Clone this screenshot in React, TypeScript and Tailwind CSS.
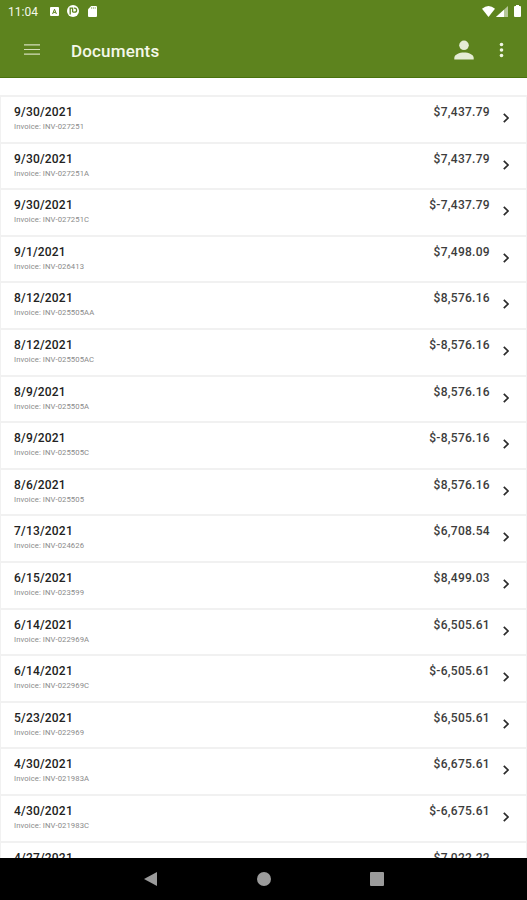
import React from "react";

interface DocumentEntry {
    date: string;
    invoice?: string;
    amount: string;
}

const documents: DocumentEntry[] = [
    { date: "9/30/2021", invoice: "INV-027251", amount: "$7,437.79" },
    { date: "9/30/2021", invoice: "INV-027251A", amount: "$7,437.79" },
    { date: "9/30/2021", invoice: "INV-027251C", amount: "$-7,437.79" },
    { date: "9/1/2021", invoice: "INV-026413", amount: "$7,498.09" },
    { date: "8/12/2021", invoice: "INV-025505AA", amount: "$8,576.16" },
    { date: "8/12/2021", invoice: "INV-025505AC", amount: "$-8,576.16" },
    { date: "8/9/2021", invoice: "INV-025505A", amount: "$8,576.16" },
    { date: "8/9/2021", invoice: "INV-025505C", amount: "$-8,576.16" },
    { date: "8/6/2021", invoice: "INV-025505", amount: "$8,576.16" },
    { date: "7/13/2021", invoice: "INV-024626", amount: "$6,708.54" },
    { date: "6/15/2021", invoice: "INV-023599", amount: "$8,499.03" },
    { date: "6/14/2021", invoice: "INV-022969A", amount: "$6,505.61" },
    { date: "6/14/2021", invoice: "INV-022969C", amount: "$-6,505.61" },
    { date: "5/23/2021", invoice: "INV-022969", amount: "$6,505.61" },
    { date: "4/30/2021", invoice: "INV-021983A", amount: "$6,675.61" },
    { date: "4/30/2021", invoice: "INV-021983C", amount: "$-6,675.61" },
    { date: "4/27/2021", amount: "$7,022.22" },
];

const StatusBar: React.FC = () => (
    <div className="flex h-[22px] items-center justify-between pl-2 pr-[6px] text-white">
        <div className="flex items-center">
            <span className="w-[31px] whitespace-nowrap pt-[2px] text-[12px] leading-none text-[#f4f8e9]">11:04</span>
            <svg className="ml-[11px] h-[9px] w-[9px]" viewBox="0 0 9 9">
                <rect width="9" height="9" rx="1" fill="#fff" />
                <path d="M2.6 7 4.5 2.2 6.4 7M3.3 5.4h2.4" fill="none" stroke="#5d831e" strokeWidth="1" />
            </svg>
            <svg className="ml-2 h-3 w-3" viewBox="0 0 12 12">
                <circle cx="6" cy="6" r="6" fill="#fff" />
                <path d="M3.2 9.5V3.2h2.4v4M7 3.2h.6a2 2 0 0 1 0 4H5.8" fill="none" stroke="#5d831e" strokeWidth="1.3" />
            </svg>
            <svg className="ml-[9px] h-[11px] w-[9px]" viewBox="0 0 9 11">
                <path d="M3.2 0H8a1 1 0 0 1 1 1v9a1 1 0 0 1-1 1H1a1 1 0 0 1-1-1V3.2z" fill="#fff" />
                <path d="M3.6 1.2v1.6M5.4 1.2v1.6M7.2 1.2v1.6" stroke="#5d831e" strokeWidth=".6" />
            </svg>
        </div>
        <div className="flex items-center">
            <svg className="h-[11px] w-[13px]" viewBox="0 0 13 11">
                <path d="M0 2.8Q6.5-2.6 13 2.8L6.5 11z" fill="#fff" />
            </svg>
            <svg className="ml-[1px] h-[11px] w-3" viewBox="0 0 12 11">
                <path d="M0 11 12 0v11z" fill="#fff" fillOpacity=".55" />
                <path d="M0 11 8 3.7V11z" fill="#fff" />
            </svg>
            <svg className="ml-[6px] h-3 w-[7px]" viewBox="0 0 7 12">
                <path d="M2 0h3v1h1a1 1 0 0 1 1 1v9a1 1 0 0 1-1 1H1a1 1 0 0 1-1-1V2a1 1 0 0 1 1-1h1z" fill="#fff" />
            </svg>
        </div>
    </div>
);

const AppBar: React.FC = () => (
    <div className="flex h-14 items-center border-b border-[#49720d] pl-6 pr-[23px]">
        <button className="flex h-4 w-4 items-center" aria-label="Menu">
            <svg className="h-[11px] w-4" viewBox="0 0 16 11">
                <path d="M0 .8h16M0 5.5h16M0 10.2h16" stroke="#d3deb9" strokeWidth="1.2" />
            </svg>
        </button>
        <h1 className="ml-[31px] flex-1 pt-[3px] text-[17px] font-medium leading-none tracking-[0.16px] text-[#f4f8e9]">Documents</h1>
        <button aria-label="Account">
            <svg className="h-5 w-5" viewBox="0 0 20 20">
                <circle cx="10" cy="5.3" r="4.8" fill="#e5ecd5" />
                <path d="M.3 19.5v-1.7c0-3.5 5.2-5.4 9.7-5.4s9.7 1.9 9.7 5.4v1.7z" fill="#e5ecd5" />
            </svg>
        </button>
        <button className="ml-[25px]" aria-label="More">
            <svg className="h-4 w-[5px]" viewBox="0 0 5 16">
                <circle cx="2.5" cy="2.5" r="1.8" fill="#f0f5e4" />
                <circle cx="2.5" cy="8" r="1.8" fill="#f0f5e4" />
                <circle cx="2.5" cy="13.5" r="1.8" fill="#f0f5e4" />
            </svg>
        </button>
    </div>
);

const DocumentRow: React.FC<{ entry: DocumentEntry }> = ({ entry }) => (
    <li className="flex h-[46.6px] shrink-0 justify-between border-b-2 border-[#f1f1f1] pl-[13px] pr-[17px] pt-[8px]">
        <div>
            <p className="text-[12px] font-medium leading-[14px] tracking-[0.2px] text-[#222]">{entry.date}</p>
            {entry.invoice && (
                <p className="mt-[3px] text-[7.7px] leading-[9px] tracking-[0.08px] text-[#8a8a8a]">Invoice: {entry.invoice}</p>
            )}
        </div>
        <div className="flex">
            <span className="text-[12px] font-medium leading-[14px] tracking-[0.3px] text-[#3c3c3c]">{entry.amount}</span>
            <svg className="ml-[13px] mt-[8px] h-[10px] w-[6px]" viewBox="0 0 6 10">
                <path d="M.8.8 5 5 .8 9.2" fill="none" stroke="#2b2b2b" strokeWidth="1.7" />
            </svg>
        </div>
    </li>
);

const NavigationBar: React.FC = () => (
    <nav className="flex h-[42px] shrink-0 items-center bg-black pl-[144px]">
        <svg className="h-[14px] w-[13px]" viewBox="0 0 13 14">
            <path d="M13 0v14L0 7z" fill="#9b9b9b" />
        </svg>
        <span className="ml-[100px] h-[14px] w-[14px] rounded-full bg-[#9b9b9b]" />
        <span className="ml-[99px] h-[14px] w-[14px] rounded-[1px] bg-[#9b9b9b]" />
    </nav>
);

const App: React.FC = () => {
    return (
        <div className="flex h-[900px] w-[527px] flex-col overflow-hidden bg-white font-[Roboto,sans-serif]">
            <header className="h-[78px] shrink-0 bg-[#5d831e]">
                <StatusBar />
                <AppBar />
            </header>
            <main className="min-h-0 flex-1 overflow-hidden pt-[17px]">
                <ul className="flex flex-col border-x border-t-2 border-[#f1f1f1]">
                    {documents.map((entry, i) => <DocumentRow key={i} entry={entry} />)}
                </ul>
            </main>
            <NavigationBar />
        </div>
    );
};

export default App;
